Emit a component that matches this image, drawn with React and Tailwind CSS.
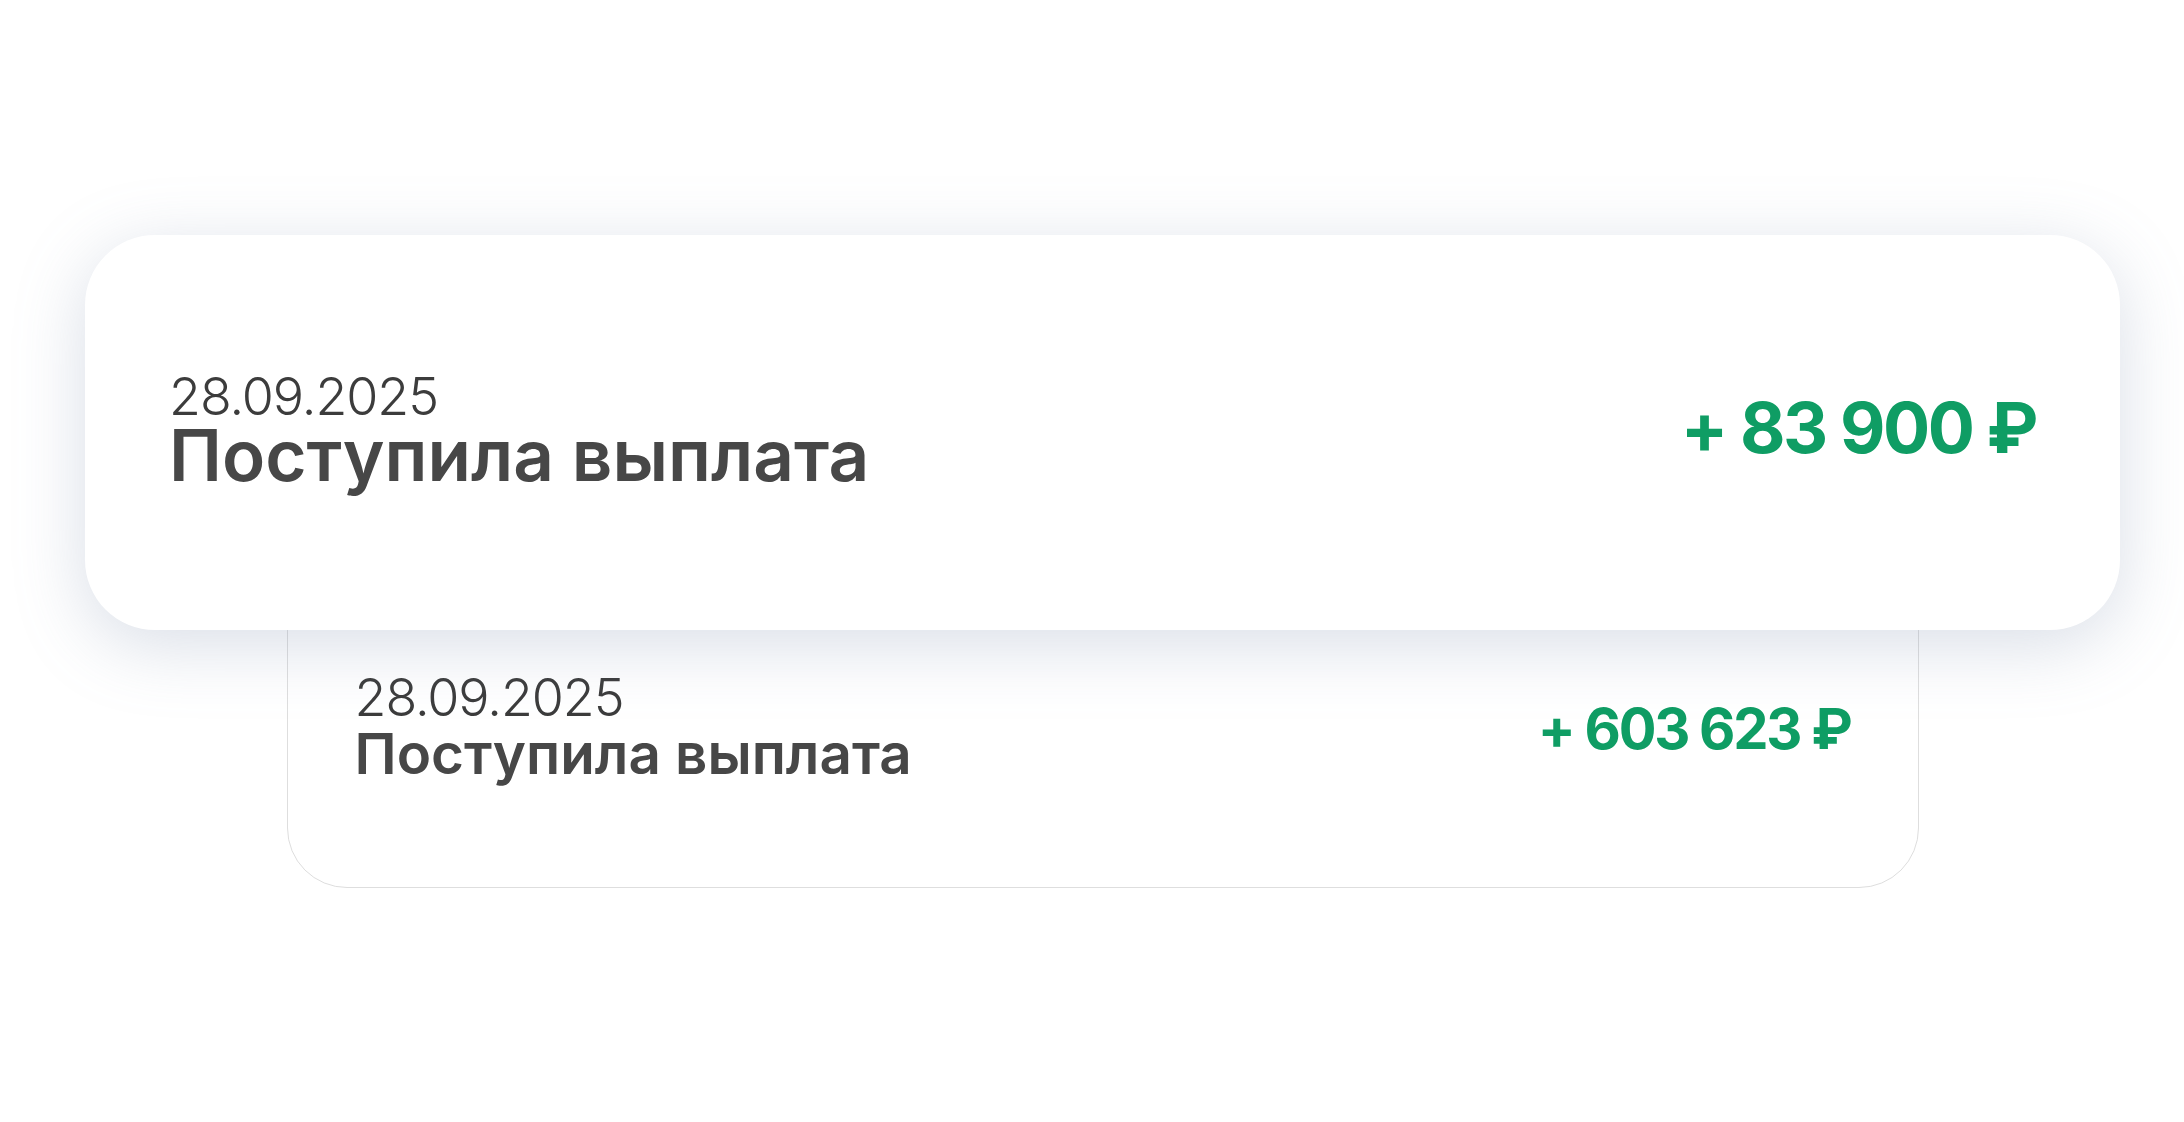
import React from "react";

const payments = [
  { date: "28.09.2025", title: "Поступила выплата", amount: "+ 83 900 ₽" },
  { date: "28.09.2025", title: "Поступила выплата", amount: "+ 603 623 ₽" },
];

export default function App() {
  const [front, back] = payments;

  return (
    <div className="min-h-screen bg-white pl-[85px] pt-[235px] font-['Inter','Noto_Sans',sans-serif]">
      <div className="flex w-[2035px] flex-col">
        {/* верхняя карточка */}
        <div className="relative z-10 flex h-[395px] items-center justify-between rounded-[70px] bg-white px-[84px] shadow-[0_15px_70px_rgba(120,135,170,0.28)]">
          <div className="flex flex-col">
            <span className="text-[52px] leading-[0.9] font-light tracking-[-0.02em] text-[#3c3c3c]">
              {front.date}
            </span>
            <span className="text-[71px] leading-none font-semibold text-[#474747]">
              {front.title}
            </span>
          </div>
          <span className="mb-[10px] text-[70px] leading-none font-bold tracking-[-0.035em] text-[#0f9d64]">
            {front.amount}
          </span>
        </div>

        {/* нижняя карточка, уходит под верхнюю */}
        <div className="mx-auto -mt-[60px] flex h-[318px] w-[1632px] items-center justify-between rounded-[60px] border border-[#dedede] bg-white px-[67px]">
          <div className="flex flex-col">
            <span className="text-[52px] leading-[0.9] font-light tracking-[-0.02em] text-[#3c3c3c]">
              {back.date}
            </span>
            <span className="mt-[4px] text-[56.5px] leading-none font-semibold text-[#474747]">
              {back.title}
            </span>
          </div>
          <span className="text-[56px] leading-none font-bold tracking-[-0.04em] text-[#0f9d64]">
            {back.amount}
          </span>
        </div>
      </div>
    </div>
  );
}
